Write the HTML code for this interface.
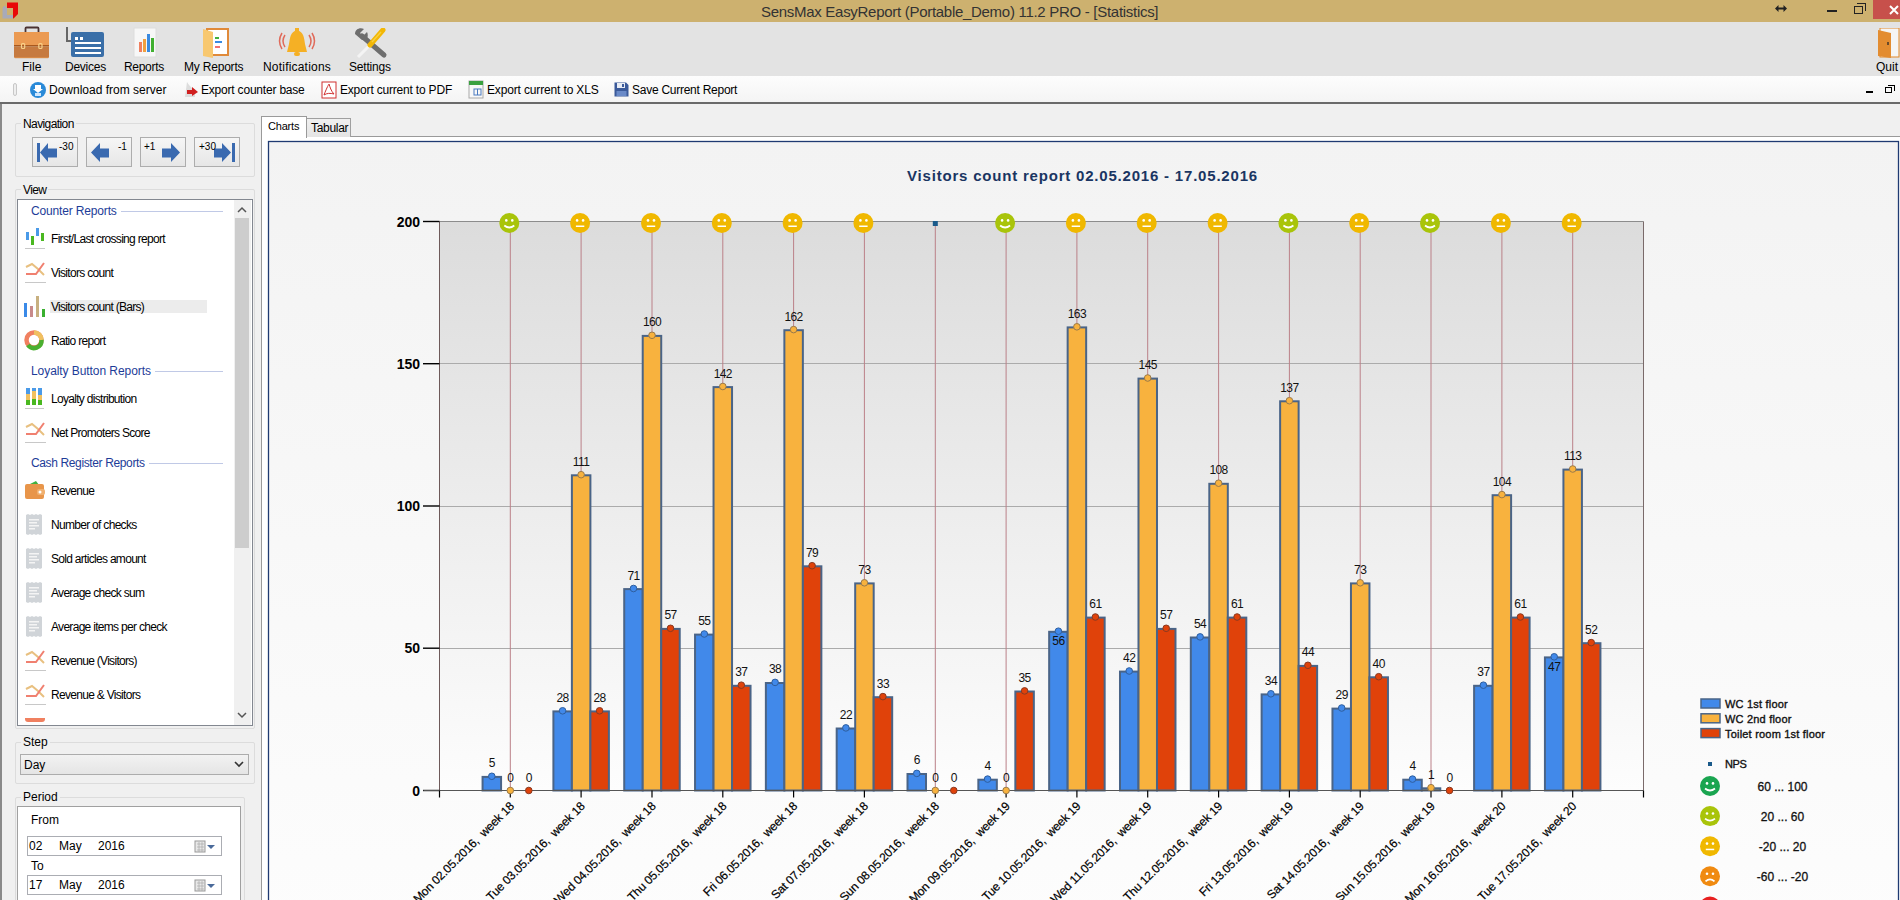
<!DOCTYPE html>
<html><head><meta charset="utf-8"><title>SensMax EasyReport</title>
<style>
*{box-sizing:border-box;margin:0;padding:0}
html,body{width:1900px;height:900px;overflow:hidden;background:#f0f0f0;font-family:"Liberation Sans",sans-serif;font-size:12px;color:#000;position:relative}
.abs{position:absolute}
.t{position:absolute;white-space:pre;line-height:14px}
#titlebar{left:0;top:0;width:1900px;height:22px;background:#cdb16f}
#ribbon{left:0;top:22px;width:1900px;height:54px;background:#e3e3e3}
#tb2{left:0;top:76px;width:1900px;height:26px;background:linear-gradient(#fdfdfd,#f4f4f4)}
#tbline{left:0;top:102px;width:1900px;height:2px;background:#6a6a6a}
.grp{position:absolute;border:1px solid #dcdcdc;border-radius:2px}
.glab{position:absolute;background:#f0f0f0;padding:0 2px;white-space:pre;line-height:14px}
.navbtn{position:absolute;top:137px;width:46px;height:30px;border:1px solid #adadad;background:linear-gradient(#f6f6f6,#e6e6e6)}
.li{position:absolute;left:51px;white-space:pre;line-height:14px;letter-spacing:-0.7px}
.hd{position:absolute;left:31px;color:#1d3c98;white-space:pre;line-height:14px;font-size:12px}
.hdl{position:absolute;height:1px;background:#c0c9e6}
</style></head><body>
<div id="titlebar" class="abs"></div>
<!-- app icon -->
<svg class="abs" style="left:0;top:0" width="22" height="22"><path d="M2.5 8 L4.5 5.5 L7 8 L7 15 L13 15 L13 18.5 L2.5 18.5Z" fill="#a8aab8"/><path d="M7 2.5 L18 2.5 L18 14 L13.5 18.5 L13 18.5 L13 8 L7 8Z" fill="#e80808"/></svg>
<div class="t" style="left:761px;top:3px;font-size:15px;line-height:18px;color:#333;letter-spacing:-0.29px">SensMax EasyReport (Portable_Demo) 11.2 PRO - [Statistics]</div>
<!-- window buttons -->
<svg class="abs" style="left:1775px;top:5px" width="12" height="8"><path d="M0 3.5 L3.5 0 L3.5 2.5 L8.5 2.5 L8.5 0 L12 3.5 L8.5 7 L8.5 4.5 L3.5 4.5 L3.5 7Z" fill="#222"/></svg>
<div class="abs" style="left:1827px;top:10px;width:10px;height:2px;background:#222"></div>
<div class="abs" style="left:1854px;top:6px;width:9px;height:8px;border:1.5px solid #222"></div>
<div class="abs" style="left:1857px;top:3px;width:9px;height:8px;border-top:1.5px solid #222;border-right:1.5px solid #222"></div>
<div class="abs" style="left:1873px;top:0;width:27px;height:19px;background:#c7504b"></div>
<svg class="abs" style="left:1889px;top:5px" width="11" height="10"><path d="M1 1 L9 9 M9 1 L1 9" stroke="#fff" stroke-width="2"/></svg>

<div id="ribbon" class="abs"></div>
<!-- ribbon icons -->
<svg class="abs" style="left:13px;top:26px" width="38" height="33"><path d="M12.5 6 V2.5 Q12.5 1.5 13.5 1.5 H24.5 Q25.5 1.5 25.5 2.5 V6" stroke="#4a3232" stroke-width="1.8" fill="none"/><rect x="1" y="6" width="35" height="13.5" fill="#eb9a52"/><rect x="1" y="19" width="35" height="1.6" fill="#a8581e"/><rect x="1" y="20.6" width="35" height="11" fill="#c67a40"/><rect x="1.8" y="31" width="33.4" height="1.2" fill="#d88a48"/><rect x="8.5" y="17.5" width="3.2" height="5" rx="1" fill="none" stroke="#f8d28a" stroke-width="1.2"/><rect x="25.8" y="17.5" width="3.2" height="5" rx="1" fill="none" stroke="#f8d28a" stroke-width="1.2"/></svg>
<svg class="abs" style="left:66px;top:27px" width="42" height="32"><rect x="0" y="0" width="2" height="15" fill="#666"/><rect x="0" y="13" width="6" height="2" fill="#666"/><rect x="5" y="5" width="33" height="25" rx="2" fill="#3a6fa8"/><rect x="9" y="10" width="3" height="3" fill="#fff"/><rect x="14" y="10" width="3" height="3" fill="#fff"/><rect x="9" y="15" width="26" height="2" fill="#fff"/><rect x="9" y="20" width="26" height="2" fill="#fff"/><rect x="9" y="25" width="26" height="2" fill="#fff"/></svg>
<svg class="abs" style="left:133px;top:27px" width="28" height="32"><rect x="1" y="1" width="22" height="29" fill="#f7f7f7" stroke="#ddd"/><rect x="6" y="15" width="3" height="10" fill="#f08060"/><rect x="10" y="12" width="3" height="13" fill="#f0a040"/><rect x="14" y="7" width="3" height="18" fill="#3a8ae0"/><rect x="18" y="11" width="3" height="14" fill="#40b030"/></svg>
<svg class="abs" style="left:202px;top:28px" width="30" height="32"><rect x="5" y="1" width="21" height="26" fill="#fff" stroke="#e08a3a" stroke-width="2"/><path d="M1 1 L11 4 L11 30 L1 28 Z" fill="#f8c870"/><rect x="13" y="9" width="4" height="2" fill="#40b040"/><rect x="13" y="13" width="7" height="2" fill="#3a8ae0"/><rect x="13" y="18" width="5" height="2" fill="#f07070"/></svg>
<svg class="abs" style="left:277px;top:28px" width="40" height="30"><path d="M20 2 C13 4 13 10 12 16 L10 24 L30 24 L28 16 C27 10 27 4 20 2Z" fill="#f5b025"/><rect x="18" y="0" width="4" height="3" fill="#f5b025"/><rect x="17" y="24" width="6" height="4" rx="2" fill="#f5b025"/><path d="M8 7 Q4 13 8 19" stroke="#e06a5a" stroke-width="1.5" fill="none"/><path d="M5 5 Q0 13 5 21" stroke="#e06a5a" stroke-width="1.5" fill="none"/><path d="M32 7 Q36 13 32 19" stroke="#e06a5a" stroke-width="1.5" fill="none"/><path d="M35 5 Q40 13 35 21" stroke="#e06a5a" stroke-width="1.5" fill="none"/></svg>
<svg class="abs" style="left:354px;top:28px" width="34" height="31"><path d="M15 18 L4 29" stroke="#f4f4f4" stroke-width="3"/><path d="M8 8 L30 27" stroke="#6e6e6e" stroke-width="5" stroke-linecap="round"/><path d="M1 6 C1 1 6 -1 10 1 L6 5 L9 8 L13 4 C15 8 13 13 8 12 Z" fill="#6e6e6e"/><path d="M29 2 L16 17" stroke="#f2b705" stroke-width="5" stroke-linecap="round"/><path d="M27 4 L18 14" stroke="#f8d040" stroke-width="1.5"/></svg>
<svg class="abs" style="left:1877px;top:28px" width="23" height="32"><rect x="3" y="0" width="19" height="29" fill="#f5f5f5" stroke="#e0882a"/><path d="M1 2 L14 5 L14 30 L1 28 Z" fill="#e38c30"/><rect x="10" y="14" width="2" height="3" fill="#6a4a2a"/></svg>
<div class="t" style="left:22px;top:60px">File</div>
<div class="t" style="left:65px;top:60px;letter-spacing:-0.25px">Devices</div>
<div class="t" style="left:124px;top:60px;letter-spacing:-0.3px">Reports</div>
<div class="t" style="left:184px;top:60px;letter-spacing:-0.2px">My Reports</div>
<div class="t" style="left:263px;top:60px;letter-spacing:0.2px">Notifications</div>
<div class="t" style="left:349px;top:60px;letter-spacing:-0.2px">Settings</div>
<div class="t" style="left:1876px;top:60px">Quit</div>

<div id="tb2" class="abs"></div>
<div class="abs" style="left:13px;top:83px;width:4px;height:13px;border:1px solid #c8c8c8;border-radius:2px;background:#eee"></div>
<svg class="abs" style="left:29px;top:81px" width="18" height="18"><circle cx="9" cy="9" r="8" fill="#2a8ad8"/><path d="M6 4 L12 4 L12 8 L14 8 L9 12 L4 8 L6 8Z" fill="#fff"/><rect x="6" y="12" width="6" height="3" fill="#d0e8ff"/></svg>
<svg class="abs" style="left:183px;top:81px" width="16" height="18"><path d="M4 1 L6 4 L12 10 L12 16 L2 16 Z" fill="#ddd"/><path d="M4 9 L9 9 L9 6 L15 11 L9 15 L9 13 L4 13Z" fill="#d02020"/></svg>
<svg class="abs" style="left:321px;top:81px" width="16" height="18"><rect x="1" y="1" width="14" height="16" fill="#fff" stroke="#d03030"/><path d="M3 14 C6 6 8 3 8 3 C9 6 10 10 13 13 C9 12 6 12 3 14Z" stroke="#d03030" fill="none"/></svg>
<svg class="abs" style="left:468px;top:80px" width="16" height="19"><rect x="1" y="1" width="14" height="17" fill="#f8f8f8" stroke="#aaa"/><rect x="1" y="1" width="14" height="4" fill="#3aa040"/><rect x="6" y="9" width="7" height="6" fill="none" stroke="#4a7ac0"/><line x1="9.5" y1="9" x2="9.5" y2="15" stroke="#4a7ac0"/></svg>
<svg class="abs" style="left:614px;top:82px" width="15" height="15"><path d="M0.5 0.5 H12 L14.5 3 V14.5 H0.5Z" fill="#3b5a9a"/><rect x="3" y="1" width="8" height="5" fill="#e8ecf4"/><rect x="8" y="2" width="2" height="3" fill="#3b5a9a"/><rect x="2.5" y="9" width="10" height="5" fill="#6a8ac8"/></svg>
<div class="t" style="left:49px;top:83px">Download from server</div>
<div class="t" style="left:201px;top:83px;letter-spacing:-0.2px">Export counter base</div>
<div class="t" style="left:340px;top:83px;letter-spacing:-0.19px">Export current to PDF</div>
<div class="t" style="left:487px;top:83px;letter-spacing:-0.15px">Export current to XLS</div>
<div class="t" style="left:632px;top:83px;letter-spacing:-0.26px">Save Current Report</div>
<div class="abs" style="left:1866px;top:91px;width:7px;height:2px;background:#000"></div>
<div class="abs" style="left:1885px;top:87px;width:7px;height:6px;border:1.5px solid #000"></div>
<div class="abs" style="left:1888px;top:85px;width:7px;height:6px;border-top:1.5px solid #000;border-right:1.5px solid #000"></div>
<div id="tbline" class="abs"></div>

<!-- left outer panel -->
<div class="abs" style="left:0;top:104px;width:2px;height:796px;background:#8a8a8a"></div>

<!-- navigation group -->
<div class="grp" style="left:15px;top:123px;width:240px;height:54px"></div>
<div class="glab" style="left:21px;top:117px;letter-spacing:-0.6px">Navigation</div>
<div class="navbtn" style="left:32px"></div>
<div class="navbtn" style="left:86px"></div>
<div class="navbtn" style="left:140px"></div>
<div class="navbtn" style="left:194px"></div>
<svg class="abs" style="left:0px;top:137px" width="270" height="30">
 <rect x="37" y="6" width="3" height="19" fill="#3a6ab0"/><path d="M40 15.5 L48 6 L48 11.5 L57 11.5 L57 20.5 L48 20.5 L48 25Z" fill="#3a6ab0"/>
 <path d="M91 15.5 L100 6 L100 11.5 L109 11.5 L109 20.5 L100 20.5 L100 25Z" fill="#3a6ab0"/>
 <path d="M180 15.5 L171 6 L171 11.5 L162 11.5 L162 20.5 L171 20.5 L171 25Z" fill="#3a6ab0"/>
 <rect x="232" y="6" width="3" height="19" fill="#3a6ab0"/><path d="M231 15.5 L222 6 L222 11.5 L214 11.5 L214 20.5 L222 20.5 L222 25Z" fill="#3a6ab0"/>
</svg>
<div class="t" style="left:59px;top:141px;font-size:10px;line-height:11px">-30</div>
<div class="t" style="left:118px;top:141px;font-size:10px;line-height:11px">-1</div>
<div class="t" style="left:144px;top:141px;font-size:10px;line-height:11px">+1</div>
<div class="t" style="left:199px;top:141px;font-size:10px;line-height:11px">+30</div>

<!-- view group -->
<div class="grp" style="left:15px;top:189px;width:240px;height:540px"></div>
<div class="glab" style="left:21px;top:183px;letter-spacing:-0.6px">View</div>
<div class="abs" style="left:17px;top:199px;width:236px;height:527px;background:#fff;border:1px solid #828790"></div>
<div class="abs" style="left:234px;top:200px;width:17px;height:525px;background:#f0f0f0"></div>
<div class="abs" style="left:235px;top:218px;width:14px;height:330px;background:#cdcdcd"></div>
<svg class="abs" style="left:235px;top:204px" width="14" height="12"><path d="M3 8 L7 4 L11 8" stroke="#555" stroke-width="1.5" fill="none"/></svg>
<svg class="abs" style="left:235px;top:709px" width="14" height="12"><path d="M3 4 L7 8 L11 4" stroke="#555" stroke-width="1.5" fill="none"/></svg>
<div class="abs" style="left:50px;top:300px;width:157px;height:13px;background:#ececec"></div>
<div class="hd" style="top:204px;letter-spacing:-0.16px">Counter Reports</div>
<div class="hdl" style="top:210.5px;left:121px;width:102px"></div>
<svg class="abs" style="left:24px;top:225px" width="24" height="26"><rect x="2" y="7" width="3" height="8" fill="#4a9ae8"/><rect x="7" y="11" width="3" height="9" fill="#4ab820"/><rect x="12" y="3" width="3" height="8" fill="#4a9ae8"/><rect x="17" y="8" width="3" height="8" fill="#4ab820"/><rect x="1" y="23" width="20" height="1" fill="#c8c8c8"/></svg>
<div class="li" style="top:232px">First/Last crossing report</div>
<svg class="abs" style="left:24px;top:259px" width="24" height="26"><path d="M2 8 L8 5 L14 10 L20 16" stroke="#e8c080" stroke-width="2" fill="none"/><path d="M2 15 L12 15 L20 4" stroke="#f08070" stroke-width="2" fill="none"/><rect x="1" y="23" width="21" height="1" fill="#c8c8c8"/></svg>
<div class="li" style="top:266px">Visitors count</div>
<svg class="abs" style="left:24px;top:293px" width="24" height="26"><rect x="0" y="10" width="3" height="14" fill="#3a8ae8"/><rect x="6" y="13" width="3" height="11" fill="#c88a8a"/><rect x="12" y="3" width="3" height="21" fill="#c8b080"/><rect x="18" y="16" width="3" height="8" fill="#3ab030"/></svg>
<div class="li" style="top:300px">Visitors count (Bars)</div>
<svg class="abs" style="left:24px;top:329px" width="24" height="24"><circle cx="10" cy="11" r="7.5" fill="none" stroke="#f08060" stroke-width="4.5"/><path d="M10 3.5 A7.5 7.5 0 0 1 17.5 11" fill="none" stroke="#f0c060" stroke-width="4.5"/><path d="M17.5 11 A7.5 7.5 0 0 1 4 16" fill="none" stroke="#4ab030" stroke-width="4.5"/></svg>
<div class="li" style="top:334px">Ratio report</div>
<div class="hd" style="top:364px;letter-spacing:-0.07px">Loyalty Button Reports</div>
<div class="hdl" style="top:370.5px;left:155px;width:68px"></div>
<svg class="abs" style="left:24px;top:385px" width="24" height="26"><rect x="2" y="3" width="4" height="6" fill="#4a9ae8"/><rect x="2" y="9" width="4" height="6" fill="#f0c060"/><rect x="2" y="15" width="4" height="5" fill="#4ab820"/><rect x="8" y="3" width="4" height="3" fill="#4a9ae8"/><rect x="8" y="6" width="4" height="8" fill="#f0c060"/><rect x="8" y="14" width="4" height="6" fill="#4ab820"/><rect x="14" y="3" width="4" height="7" fill="#4a9ae8"/><rect x="14" y="10" width="4" height="5" fill="#f0c060"/><rect x="14" y="15" width="4" height="5" fill="#4ab820"/><rect x="1" y="23" width="19" height="1" fill="#c8c8c8"/></svg>
<div class="li" style="top:392px">Loyalty distribution</div>
<svg class="abs" style="left:24px;top:419px" width="24" height="26"><path d="M2 8 L8 5 L14 10 L20 16" stroke="#e8c080" stroke-width="2" fill="none"/><path d="M2 15 L12 15 L20 4" stroke="#f08070" stroke-width="2" fill="none"/><rect x="1" y="23" width="21" height="1" fill="#c8c8c8"/></svg>
<div class="li" style="top:426px">Net Promoters Score</div>
<div class="hd" style="top:456px;letter-spacing:-0.37px">Cash Register Reports</div>
<div class="hdl" style="top:462.5px;left:149px;width:74px"></div>
<svg class="abs" style="left:24px;top:479px" width="24" height="24"><path d="M6 5 L12 2 L15 6Z" fill="#40b040"/><rect x="1" y="5" width="19" height="15" rx="2" fill="#e8954a"/><rect x="13" y="10" width="8" height="6" rx="2" fill="#f0b070"/><circle cx="16" cy="13" r="1.5" fill="#fff"/></svg>
<div class="li" style="top:484px">Revenue</div>
<svg class="abs" style="left:24px;top:513px" width="24" height="24"><path d="M2 2 L4 1 L6 2 L8 1 L10 2 L12 1 L14 2 L16 1 L18 2 L18 21 L16 22 L14 21 L12 22 L10 21 L8 22 L6 21 L4 22 L2 21Z" fill="#d0d4d8"/><rect x="5" y="6" width="10" height="1.5" fill="#f4f4f4"/><rect x="5" y="9" width="8" height="1.5" fill="#f4f4f4"/><rect x="5" y="12" width="10" height="1.5" fill="#f4f4f4"/><rect x="5" y="15" width="6" height="1.5" fill="#f4f4f4"/></svg>
<div class="li" style="top:518px">Number of checks</div>
<svg class="abs" style="left:24px;top:547px" width="24" height="24"><path d="M2 2 L4 1 L6 2 L8 1 L10 2 L12 1 L14 2 L16 1 L18 2 L18 21 L16 22 L14 21 L12 22 L10 21 L8 22 L6 21 L4 22 L2 21Z" fill="#d0d4d8"/><rect x="5" y="6" width="10" height="1.5" fill="#f4f4f4"/><rect x="5" y="9" width="8" height="1.5" fill="#f4f4f4"/><rect x="5" y="12" width="10" height="1.5" fill="#f4f4f4"/><rect x="5" y="15" width="6" height="1.5" fill="#f4f4f4"/></svg>
<div class="li" style="top:552px">Sold articles amount</div>
<svg class="abs" style="left:24px;top:581px" width="24" height="24"><path d="M2 2 L4 1 L6 2 L8 1 L10 2 L12 1 L14 2 L16 1 L18 2 L18 21 L16 22 L14 21 L12 22 L10 21 L8 22 L6 21 L4 22 L2 21Z" fill="#d0d4d8"/><rect x="5" y="6" width="10" height="1.5" fill="#f4f4f4"/><rect x="5" y="9" width="8" height="1.5" fill="#f4f4f4"/><rect x="5" y="12" width="10" height="1.5" fill="#f4f4f4"/><rect x="5" y="15" width="6" height="1.5" fill="#f4f4f4"/></svg>
<div class="li" style="top:586px">Average check sum</div>
<svg class="abs" style="left:24px;top:615px" width="24" height="24"><path d="M2 2 L4 1 L6 2 L8 1 L10 2 L12 1 L14 2 L16 1 L18 2 L18 21 L16 22 L14 21 L12 22 L10 21 L8 22 L6 21 L4 22 L2 21Z" fill="#d0d4d8"/><rect x="5" y="6" width="10" height="1.5" fill="#f4f4f4"/><rect x="5" y="9" width="8" height="1.5" fill="#f4f4f4"/><rect x="5" y="12" width="10" height="1.5" fill="#f4f4f4"/><rect x="5" y="15" width="6" height="1.5" fill="#f4f4f4"/></svg>
<div class="li" style="top:620px">Average items per check</div>
<svg class="abs" style="left:24px;top:647px" width="24" height="26"><path d="M2 8 L8 5 L14 10 L20 16" stroke="#e8c080" stroke-width="2" fill="none"/><path d="M2 15 L12 15 L20 4" stroke="#f08070" stroke-width="2" fill="none"/><rect x="1" y="23" width="21" height="1" fill="#c8c8c8"/></svg>
<div class="li" style="top:654px">Revenue (Visitors)</div>
<svg class="abs" style="left:24px;top:681px" width="24" height="26"><path d="M2 8 L8 5 L14 10 L20 16" stroke="#e8c080" stroke-width="2" fill="none"/><path d="M2 15 L12 15 L20 4" stroke="#f08070" stroke-width="2" fill="none"/><rect x="1" y="23" width="21" height="1" fill="#c8c8c8"/></svg>
<div class="li" style="top:688px">Revenue &amp; Visitors</div>
<div class="abs" style="left:25px;top:718px;width:20px;height:4px;background:#f08060;border-radius:0 0 3px 3px"></div>

<!-- step group -->
<div class="grp" style="left:15px;top:742px;width:240px;height:42px"></div>
<div class="glab" style="left:21px;top:735px">Step</div>
<div class="abs" style="left:20px;top:754px;width:229px;height:21px;border:1px solid #acacac;background:linear-gradient(#f2f2f2,#e5e5e5)"></div>
<div class="t" style="left:24px;top:758px">Day</div>
<svg class="abs" style="left:232px;top:758px" width="14" height="12"><path d="M3 4 L7 8 L11 4" stroke="#333" stroke-width="1.6" fill="none"/></svg>

<!-- period group -->
<div class="grp" style="left:15px;top:797px;width:230px;height:120px"></div>
<div class="glab" style="left:21px;top:790px">Period</div>
<div class="abs" style="left:17px;top:806px;width:224px;height:100px;background:#fff;border:1px solid #a0a0a0"></div>
<div class="t" style="left:31px;top:813px">From</div>
<div class="abs" style="left:27px;top:836px;width:195px;height:20px;background:#fff;border:1px solid #abadb3"></div>
<div class="t" style="left:29px;top:839px">02</div><div class="t" style="left:59px;top:839px">May</div><div class="t" style="left:98px;top:839px">2016</div>
<div class="t" style="left:31px;top:859px">To</div>
<div class="abs" style="left:27px;top:875px;width:195px;height:20px;background:#fff;border:1px solid #abadb3"></div>
<div class="t" style="left:29px;top:878px">17</div><div class="t" style="left:59px;top:878px">May</div><div class="t" style="left:98px;top:878px">2016</div>
<svg class="abs" style="left:194px;top:838px" width="24" height="16"><rect x="1" y="3" width="10" height="11" fill="#e8e8e8" stroke="#999"/><path d="M3 6 H10 M3 9 H10 M3 12 H10 M5 4 V14 M8 4 V14" stroke="#aaa" stroke-width="0.7"/><path d="M13 7 L21 7 L17 11Z" fill="#4a6a9a"/></svg>
<svg class="abs" style="left:194px;top:877px" width="24" height="16"><rect x="1" y="3" width="10" height="11" fill="#e8e8e8" stroke="#999"/><path d="M3 6 H10 M3 9 H10 M3 12 H10 M5 4 V14 M8 4 V14" stroke="#aaa" stroke-width="0.7"/><path d="M13 7 L21 7 L17 11Z" fill="#4a6a9a"/></svg>

<!-- tabs -->
<div class="abs" style="left:261px;top:136px;width:1639px;height:764px;background:#fff;border-left:1px solid #9a9a9a;border-top:1px solid #9a9a9a"></div>
<div class="abs" style="left:306px;top:118px;width:45px;height:19px;background:linear-gradient(#f0f0f0,#e4e4e4);border:1px solid #a0a0a0;border-bottom:none"></div>
<div class="abs" style="left:261px;top:116px;width:46px;height:22px;background:#fff;border:1px solid #9a9a9a;border-bottom:none"></div>
<div class="t" style="left:268px;top:119px;font-size:11px;letter-spacing:-0.2px">Charts</div>
<div class="t" style="left:311px;top:121px;font-size:12px;letter-spacing:-0.3px">Tabular</div>

<svg width="1900" height="900" viewBox="0 0 1900 900" style="position:absolute;left:0;top:0">
<defs><linearGradient id="pg" x1="0" y1="0" x2="0" y2="1"><stop offset="0" stop-color="#dcdcdc"/><stop offset="1" stop-color="#fdfdfd"/></linearGradient><linearGradient id="cg" x1="0" y1="0" x2="0" y2="1"><stop offset="0" stop-color="#f3f3f3"/><stop offset="1" stop-color="#fdfdfd"/></linearGradient></defs>
<rect x="268.5" y="141.5" width="1630" height="800" fill="url(#cg)" stroke="#1f3a72" stroke-width="1.3"/>
<text x="1082.5" y="181" text-anchor="middle" font-family="Liberation Sans" font-weight="bold" font-size="15" fill="#1a3562" letter-spacing="0.8">Visitors count report 02.05.2016 - 17.05.2016</text>
<rect x="439.5" y="221.5" width="1204.0" height="569.0" fill="url(#pg)"/>
<line x1="439.5" y1="648.5" x2="1643.5" y2="648.5" stroke="#ababab" stroke-width="1"/>
<line x1="439.5" y1="506.5" x2="1643.5" y2="506.5" stroke="#ababab" stroke-width="1"/>
<line x1="439.5" y1="363.5" x2="1643.5" y2="363.5" stroke="#ababab" stroke-width="1"/>
<line x1="439.5" y1="221.5" x2="1643.5" y2="221.5" stroke="#8c8c8c" stroke-width="1.2"/>
<line x1="439.5" y1="221.5" x2="439.5" y2="790.5" stroke="#6e5a5a" stroke-width="1"/>
<line x1="1643.5" y1="221.5" x2="1643.5" y2="790.5" stroke="#7a6a6a" stroke-width="1"/>
<line x1="423" y1="790.5" x2="439.5" y2="790.5" stroke="#000" stroke-width="1.4"/>
<text x="420" y="795.5" text-anchor="end" font-family="Liberation Sans" font-size="14" font-weight="bold" fill="#000">0</text>
<line x1="423" y1="648.2" x2="439.5" y2="648.2" stroke="#000" stroke-width="1.4"/>
<text x="420" y="653.2" text-anchor="end" font-family="Liberation Sans" font-size="14" font-weight="bold" fill="#000">50</text>
<line x1="423" y1="506.0" x2="439.5" y2="506.0" stroke="#000" stroke-width="1.4"/>
<text x="420" y="511.0" text-anchor="end" font-family="Liberation Sans" font-size="14" font-weight="bold" fill="#000">100</text>
<line x1="423" y1="363.7" x2="439.5" y2="363.7" stroke="#000" stroke-width="1.4"/>
<text x="420" y="368.7" text-anchor="end" font-family="Liberation Sans" font-size="14" font-weight="bold" fill="#000">150</text>
<line x1="423" y1="221.5" x2="439.5" y2="221.5" stroke="#000" stroke-width="1.4"/>
<text x="420" y="226.5" text-anchor="end" font-family="Liberation Sans" font-size="14" font-weight="bold" fill="#000">200</text>
<line x1="510.3" y1="221.5" x2="510.3" y2="790.5" stroke="#bb8088" stroke-width="1"/>
<line x1="581.1" y1="221.5" x2="581.1" y2="790.5" stroke="#bb8088" stroke-width="1"/>
<line x1="652.0" y1="221.5" x2="652.0" y2="790.5" stroke="#bb8088" stroke-width="1"/>
<line x1="722.8" y1="221.5" x2="722.8" y2="790.5" stroke="#bb8088" stroke-width="1"/>
<line x1="793.6" y1="221.5" x2="793.6" y2="790.5" stroke="#bb8088" stroke-width="1"/>
<line x1="864.4" y1="221.5" x2="864.4" y2="790.5" stroke="#bb8088" stroke-width="1"/>
<line x1="935.3" y1="221.5" x2="935.3" y2="790.5" stroke="#bb8088" stroke-width="1"/>
<line x1="1006.1" y1="221.5" x2="1006.1" y2="790.5" stroke="#bb8088" stroke-width="1"/>
<line x1="1076.9" y1="221.5" x2="1076.9" y2="790.5" stroke="#bb8088" stroke-width="1"/>
<line x1="1147.7" y1="221.5" x2="1147.7" y2="790.5" stroke="#bb8088" stroke-width="1"/>
<line x1="1218.6" y1="221.5" x2="1218.6" y2="790.5" stroke="#bb8088" stroke-width="1"/>
<line x1="1289.4" y1="221.5" x2="1289.4" y2="790.5" stroke="#bb8088" stroke-width="1"/>
<line x1="1360.2" y1="221.5" x2="1360.2" y2="790.5" stroke="#bb8088" stroke-width="1"/>
<line x1="1431.0" y1="221.5" x2="1431.0" y2="790.5" stroke="#bb8088" stroke-width="1"/>
<line x1="1501.9" y1="221.5" x2="1501.9" y2="790.5" stroke="#bb8088" stroke-width="1"/>
<line x1="1572.7" y1="221.5" x2="1572.7" y2="790.5" stroke="#bb8088" stroke-width="1"/>
<rect x="482.57" y="776.9" width="18.5" height="13.6" fill="#4189ea" stroke="#4a6487" stroke-width="2"/>
<rect x="553.40" y="711.4" width="18.5" height="79.1" fill="#4189ea" stroke="#4a6487" stroke-width="2"/>
<rect x="571.90" y="475.3" width="18.5" height="315.2" fill="#f8b23e" stroke="#4a6487" stroke-width="2"/>
<rect x="590.40" y="711.4" width="18.5" height="79.1" fill="#e0420a" stroke="#4a6487" stroke-width="2"/>
<rect x="624.22" y="589.1" width="18.5" height="201.4" fill="#4189ea" stroke="#4a6487" stroke-width="2"/>
<rect x="642.72" y="335.9" width="18.5" height="454.6" fill="#f8b23e" stroke="#4a6487" stroke-width="2"/>
<rect x="661.22" y="628.9" width="18.5" height="161.6" fill="#e0420a" stroke="#4a6487" stroke-width="2"/>
<rect x="695.04" y="634.6" width="18.5" height="155.9" fill="#4189ea" stroke="#4a6487" stroke-width="2"/>
<rect x="713.54" y="387.1" width="18.5" height="403.4" fill="#f8b23e" stroke="#4a6487" stroke-width="2"/>
<rect x="732.04" y="685.8" width="18.5" height="104.7" fill="#e0420a" stroke="#4a6487" stroke-width="2"/>
<rect x="765.87" y="683.0" width="18.5" height="107.5" fill="#4189ea" stroke="#4a6487" stroke-width="2"/>
<rect x="784.37" y="330.2" width="18.5" height="460.3" fill="#f8b23e" stroke="#4a6487" stroke-width="2"/>
<rect x="802.87" y="566.3" width="18.5" height="224.2" fill="#e0420a" stroke="#4a6487" stroke-width="2"/>
<rect x="836.69" y="728.5" width="18.5" height="62.0" fill="#4189ea" stroke="#4a6487" stroke-width="2"/>
<rect x="855.19" y="583.4" width="18.5" height="207.1" fill="#f8b23e" stroke="#4a6487" stroke-width="2"/>
<rect x="873.69" y="697.2" width="18.5" height="93.3" fill="#e0420a" stroke="#4a6487" stroke-width="2"/>
<rect x="907.51" y="774.0" width="18.5" height="16.5" fill="#4189ea" stroke="#4a6487" stroke-width="2"/>
<rect x="978.34" y="779.7" width="18.5" height="10.8" fill="#4189ea" stroke="#4a6487" stroke-width="2"/>
<rect x="1015.34" y="691.5" width="18.5" height="99.0" fill="#e0420a" stroke="#4a6487" stroke-width="2"/>
<rect x="1049.16" y="631.8" width="18.5" height="158.7" fill="#4189ea" stroke="#4a6487" stroke-width="2"/>
<rect x="1067.66" y="327.4" width="18.5" height="463.1" fill="#f8b23e" stroke="#4a6487" stroke-width="2"/>
<rect x="1086.16" y="617.6" width="18.5" height="172.9" fill="#e0420a" stroke="#4a6487" stroke-width="2"/>
<rect x="1119.99" y="671.6" width="18.5" height="118.9" fill="#4189ea" stroke="#4a6487" stroke-width="2"/>
<rect x="1138.49" y="378.6" width="18.5" height="411.9" fill="#f8b23e" stroke="#4a6487" stroke-width="2"/>
<rect x="1156.99" y="628.9" width="18.5" height="161.6" fill="#e0420a" stroke="#4a6487" stroke-width="2"/>
<rect x="1190.81" y="637.5" width="18.5" height="153.0" fill="#4189ea" stroke="#4a6487" stroke-width="2"/>
<rect x="1209.31" y="483.8" width="18.5" height="306.7" fill="#f8b23e" stroke="#4a6487" stroke-width="2"/>
<rect x="1227.81" y="617.6" width="18.5" height="172.9" fill="#e0420a" stroke="#4a6487" stroke-width="2"/>
<rect x="1261.63" y="694.4" width="18.5" height="96.1" fill="#4189ea" stroke="#4a6487" stroke-width="2"/>
<rect x="1280.13" y="401.3" width="18.5" height="389.2" fill="#f8b23e" stroke="#4a6487" stroke-width="2"/>
<rect x="1298.63" y="665.9" width="18.5" height="124.6" fill="#e0420a" stroke="#4a6487" stroke-width="2"/>
<rect x="1332.46" y="708.6" width="18.5" height="81.9" fill="#4189ea" stroke="#4a6487" stroke-width="2"/>
<rect x="1350.96" y="583.4" width="18.5" height="207.1" fill="#f8b23e" stroke="#4a6487" stroke-width="2"/>
<rect x="1369.46" y="677.3" width="18.5" height="113.2" fill="#e0420a" stroke="#4a6487" stroke-width="2"/>
<rect x="1403.28" y="779.7" width="18.5" height="10.8" fill="#4189ea" stroke="#4a6487" stroke-width="2"/>
<rect x="1421.78" y="788.3" width="18.5" height="2.2" fill="#f8b23e" stroke="#4a6487" stroke-width="2"/>
<rect x="1474.10" y="685.8" width="18.5" height="104.7" fill="#4189ea" stroke="#4a6487" stroke-width="2"/>
<rect x="1492.60" y="495.2" width="18.5" height="295.3" fill="#f8b23e" stroke="#4a6487" stroke-width="2"/>
<rect x="1511.10" y="617.6" width="18.5" height="172.9" fill="#e0420a" stroke="#4a6487" stroke-width="2"/>
<rect x="1544.93" y="657.4" width="18.5" height="133.1" fill="#4189ea" stroke="#4a6487" stroke-width="2"/>
<rect x="1563.43" y="469.6" width="18.5" height="320.9" fill="#f8b23e" stroke="#4a6487" stroke-width="2"/>
<rect x="1581.93" y="643.2" width="18.5" height="147.3" fill="#e0420a" stroke="#4a6487" stroke-width="2"/>
<line x1="423.5" y1="790.5" x2="1643.5" y2="790.5" stroke="#555" stroke-width="1.2"/>
<line x1="439.5" y1="790.5" x2="439.5" y2="797.5" stroke="#000" stroke-width="1.2"/>
<line x1="510.3" y1="790.5" x2="510.3" y2="797.5" stroke="#000" stroke-width="1.2"/>
<line x1="581.1" y1="790.5" x2="581.1" y2="797.5" stroke="#000" stroke-width="1.2"/>
<line x1="652.0" y1="790.5" x2="652.0" y2="797.5" stroke="#000" stroke-width="1.2"/>
<line x1="722.8" y1="790.5" x2="722.8" y2="797.5" stroke="#000" stroke-width="1.2"/>
<line x1="793.6" y1="790.5" x2="793.6" y2="797.5" stroke="#000" stroke-width="1.2"/>
<line x1="864.4" y1="790.5" x2="864.4" y2="797.5" stroke="#000" stroke-width="1.2"/>
<line x1="935.3" y1="790.5" x2="935.3" y2="797.5" stroke="#000" stroke-width="1.2"/>
<line x1="1006.1" y1="790.5" x2="1006.1" y2="797.5" stroke="#000" stroke-width="1.2"/>
<line x1="1076.9" y1="790.5" x2="1076.9" y2="797.5" stroke="#000" stroke-width="1.2"/>
<line x1="1147.7" y1="790.5" x2="1147.7" y2="797.5" stroke="#000" stroke-width="1.2"/>
<line x1="1218.6" y1="790.5" x2="1218.6" y2="797.5" stroke="#000" stroke-width="1.2"/>
<line x1="1289.4" y1="790.5" x2="1289.4" y2="797.5" stroke="#000" stroke-width="1.2"/>
<line x1="1360.2" y1="790.5" x2="1360.2" y2="797.5" stroke="#000" stroke-width="1.2"/>
<line x1="1431.0" y1="790.5" x2="1431.0" y2="797.5" stroke="#000" stroke-width="1.2"/>
<line x1="1501.9" y1="790.5" x2="1501.9" y2="797.5" stroke="#000" stroke-width="1.2"/>
<line x1="1572.7" y1="790.5" x2="1572.7" y2="797.5" stroke="#000" stroke-width="1.2"/>
<line x1="1643.5" y1="790.5" x2="1643.5" y2="797.5" stroke="#000" stroke-width="1.2"/>
<circle cx="491.8" cy="776.3" r="3.3" fill="#4189ea" stroke="#2f5f9f" stroke-width="1"/>
<circle cx="510.3" cy="790.5" r="3.3" fill="#f8b23e" stroke="#9a7a4a" stroke-width="1"/>
<circle cx="528.8" cy="790.5" r="3.3" fill="#e0420a" stroke="#8a3a22" stroke-width="1"/>
<text x="491.8" y="767.3" text-anchor="middle" font-family="Liberation Sans" font-size="12" fill="#111" letter-spacing="-0.6">5</text>
<text x="510.3" y="781.5" text-anchor="middle" font-family="Liberation Sans" font-size="12" fill="#111" letter-spacing="-0.6">0</text>
<text x="528.8" y="781.5" text-anchor="middle" font-family="Liberation Sans" font-size="12" fill="#111" letter-spacing="-0.6">0</text>
<circle cx="562.6" cy="710.8" r="3.3" fill="#4189ea" stroke="#2f5f9f" stroke-width="1"/>
<circle cx="581.1" cy="474.7" r="3.3" fill="#f8b23e" stroke="#9a7a4a" stroke-width="1"/>
<circle cx="599.6" cy="710.8" r="3.3" fill="#e0420a" stroke="#8a3a22" stroke-width="1"/>
<text x="562.6" y="701.8" text-anchor="middle" font-family="Liberation Sans" font-size="12" fill="#111" letter-spacing="-0.6">28</text>
<text x="581.1" y="465.7" text-anchor="middle" font-family="Liberation Sans" font-size="12" fill="#111" letter-spacing="-0.6">111</text>
<text x="599.6" y="701.8" text-anchor="middle" font-family="Liberation Sans" font-size="12" fill="#111" letter-spacing="-0.6">28</text>
<circle cx="633.5" cy="588.5" r="3.3" fill="#4189ea" stroke="#2f5f9f" stroke-width="1"/>
<circle cx="652.0" cy="335.3" r="3.3" fill="#f8b23e" stroke="#9a7a4a" stroke-width="1"/>
<circle cx="670.5" cy="628.3" r="3.3" fill="#e0420a" stroke="#8a3a22" stroke-width="1"/>
<text x="633.5" y="579.5" text-anchor="middle" font-family="Liberation Sans" font-size="12" fill="#111" letter-spacing="-0.6">71</text>
<text x="652.0" y="326.3" text-anchor="middle" font-family="Liberation Sans" font-size="12" fill="#111" letter-spacing="-0.6">160</text>
<text x="670.5" y="619.3" text-anchor="middle" font-family="Liberation Sans" font-size="12" fill="#111" letter-spacing="-0.6">57</text>
<circle cx="704.3" cy="634.0" r="3.3" fill="#4189ea" stroke="#2f5f9f" stroke-width="1"/>
<circle cx="722.8" cy="386.5" r="3.3" fill="#f8b23e" stroke="#9a7a4a" stroke-width="1"/>
<circle cx="741.3" cy="685.2" r="3.3" fill="#e0420a" stroke="#8a3a22" stroke-width="1"/>
<text x="704.3" y="625.0" text-anchor="middle" font-family="Liberation Sans" font-size="12" fill="#111" letter-spacing="-0.6">55</text>
<text x="722.8" y="377.5" text-anchor="middle" font-family="Liberation Sans" font-size="12" fill="#111" letter-spacing="-0.6">142</text>
<text x="741.3" y="676.2" text-anchor="middle" font-family="Liberation Sans" font-size="12" fill="#111" letter-spacing="-0.6">37</text>
<circle cx="775.1" cy="682.4" r="3.3" fill="#4189ea" stroke="#2f5f9f" stroke-width="1"/>
<circle cx="793.6" cy="329.6" r="3.3" fill="#f8b23e" stroke="#9a7a4a" stroke-width="1"/>
<circle cx="812.1" cy="565.7" r="3.3" fill="#e0420a" stroke="#8a3a22" stroke-width="1"/>
<text x="775.1" y="673.4" text-anchor="middle" font-family="Liberation Sans" font-size="12" fill="#111" letter-spacing="-0.6">38</text>
<text x="793.6" y="320.6" text-anchor="middle" font-family="Liberation Sans" font-size="12" fill="#111" letter-spacing="-0.6">162</text>
<text x="812.1" y="556.7" text-anchor="middle" font-family="Liberation Sans" font-size="12" fill="#111" letter-spacing="-0.6">79</text>
<circle cx="845.9" cy="727.9" r="3.3" fill="#4189ea" stroke="#2f5f9f" stroke-width="1"/>
<circle cx="864.4" cy="582.8" r="3.3" fill="#f8b23e" stroke="#9a7a4a" stroke-width="1"/>
<circle cx="882.9" cy="696.6" r="3.3" fill="#e0420a" stroke="#8a3a22" stroke-width="1"/>
<text x="845.9" y="718.9" text-anchor="middle" font-family="Liberation Sans" font-size="12" fill="#111" letter-spacing="-0.6">22</text>
<text x="864.4" y="573.8" text-anchor="middle" font-family="Liberation Sans" font-size="12" fill="#111" letter-spacing="-0.6">73</text>
<text x="882.9" y="687.6" text-anchor="middle" font-family="Liberation Sans" font-size="12" fill="#111" letter-spacing="-0.6">33</text>
<circle cx="916.8" cy="773.4" r="3.3" fill="#4189ea" stroke="#2f5f9f" stroke-width="1"/>
<circle cx="935.3" cy="790.5" r="3.3" fill="#f8b23e" stroke="#9a7a4a" stroke-width="1"/>
<circle cx="953.8" cy="790.5" r="3.3" fill="#e0420a" stroke="#8a3a22" stroke-width="1"/>
<text x="916.8" y="764.4" text-anchor="middle" font-family="Liberation Sans" font-size="12" fill="#111" letter-spacing="-0.6">6</text>
<text x="935.3" y="781.5" text-anchor="middle" font-family="Liberation Sans" font-size="12" fill="#111" letter-spacing="-0.6">0</text>
<text x="953.8" y="781.5" text-anchor="middle" font-family="Liberation Sans" font-size="12" fill="#111" letter-spacing="-0.6">0</text>
<circle cx="987.6" cy="779.1" r="3.3" fill="#4189ea" stroke="#2f5f9f" stroke-width="1"/>
<circle cx="1006.1" cy="790.5" r="3.3" fill="#f8b23e" stroke="#9a7a4a" stroke-width="1"/>
<circle cx="1024.6" cy="690.9" r="3.3" fill="#e0420a" stroke="#8a3a22" stroke-width="1"/>
<text x="987.6" y="770.1" text-anchor="middle" font-family="Liberation Sans" font-size="12" fill="#111" letter-spacing="-0.6">4</text>
<text x="1006.1" y="781.5" text-anchor="middle" font-family="Liberation Sans" font-size="12" fill="#111" letter-spacing="-0.6">0</text>
<text x="1024.6" y="681.9" text-anchor="middle" font-family="Liberation Sans" font-size="12" fill="#111" letter-spacing="-0.6">35</text>
<circle cx="1058.4" cy="631.2" r="3.3" fill="#4189ea" stroke="#2f5f9f" stroke-width="1"/>
<circle cx="1076.9" cy="326.8" r="3.3" fill="#f8b23e" stroke="#9a7a4a" stroke-width="1"/>
<circle cx="1095.4" cy="617.0" r="3.3" fill="#e0420a" stroke="#8a3a22" stroke-width="1"/>
<text x="1058.4" y="645.2" text-anchor="middle" font-family="Liberation Sans" font-size="12" fill="#111" letter-spacing="-0.6">56</text>
<text x="1076.9" y="317.8" text-anchor="middle" font-family="Liberation Sans" font-size="12" fill="#111" letter-spacing="-0.6">163</text>
<text x="1095.4" y="608.0" text-anchor="middle" font-family="Liberation Sans" font-size="12" fill="#111" letter-spacing="-0.6">61</text>
<circle cx="1129.2" cy="671.0" r="3.3" fill="#4189ea" stroke="#2f5f9f" stroke-width="1"/>
<circle cx="1147.7" cy="378.0" r="3.3" fill="#f8b23e" stroke="#9a7a4a" stroke-width="1"/>
<circle cx="1166.2" cy="628.3" r="3.3" fill="#e0420a" stroke="#8a3a22" stroke-width="1"/>
<text x="1129.2" y="662.0" text-anchor="middle" font-family="Liberation Sans" font-size="12" fill="#111" letter-spacing="-0.6">42</text>
<text x="1147.7" y="369.0" text-anchor="middle" font-family="Liberation Sans" font-size="12" fill="#111" letter-spacing="-0.6">145</text>
<text x="1166.2" y="619.3" text-anchor="middle" font-family="Liberation Sans" font-size="12" fill="#111" letter-spacing="-0.6">57</text>
<circle cx="1200.1" cy="636.9" r="3.3" fill="#4189ea" stroke="#2f5f9f" stroke-width="1"/>
<circle cx="1218.6" cy="483.2" r="3.3" fill="#f8b23e" stroke="#9a7a4a" stroke-width="1"/>
<circle cx="1237.1" cy="617.0" r="3.3" fill="#e0420a" stroke="#8a3a22" stroke-width="1"/>
<text x="1200.1" y="627.9" text-anchor="middle" font-family="Liberation Sans" font-size="12" fill="#111" letter-spacing="-0.6">54</text>
<text x="1218.6" y="474.2" text-anchor="middle" font-family="Liberation Sans" font-size="12" fill="#111" letter-spacing="-0.6">108</text>
<text x="1237.1" y="608.0" text-anchor="middle" font-family="Liberation Sans" font-size="12" fill="#111" letter-spacing="-0.6">61</text>
<circle cx="1270.9" cy="693.8" r="3.3" fill="#4189ea" stroke="#2f5f9f" stroke-width="1"/>
<circle cx="1289.4" cy="400.7" r="3.3" fill="#f8b23e" stroke="#9a7a4a" stroke-width="1"/>
<circle cx="1307.9" cy="665.3" r="3.3" fill="#e0420a" stroke="#8a3a22" stroke-width="1"/>
<text x="1270.9" y="684.8" text-anchor="middle" font-family="Liberation Sans" font-size="12" fill="#111" letter-spacing="-0.6">34</text>
<text x="1289.4" y="391.7" text-anchor="middle" font-family="Liberation Sans" font-size="12" fill="#111" letter-spacing="-0.6">137</text>
<text x="1307.9" y="656.3" text-anchor="middle" font-family="Liberation Sans" font-size="12" fill="#111" letter-spacing="-0.6">44</text>
<circle cx="1341.7" cy="708.0" r="3.3" fill="#4189ea" stroke="#2f5f9f" stroke-width="1"/>
<circle cx="1360.2" cy="582.8" r="3.3" fill="#f8b23e" stroke="#9a7a4a" stroke-width="1"/>
<circle cx="1378.7" cy="676.7" r="3.3" fill="#e0420a" stroke="#8a3a22" stroke-width="1"/>
<text x="1341.7" y="699.0" text-anchor="middle" font-family="Liberation Sans" font-size="12" fill="#111" letter-spacing="-0.6">29</text>
<text x="1360.2" y="573.8" text-anchor="middle" font-family="Liberation Sans" font-size="12" fill="#111" letter-spacing="-0.6">73</text>
<text x="1378.7" y="667.7" text-anchor="middle" font-family="Liberation Sans" font-size="12" fill="#111" letter-spacing="-0.6">40</text>
<circle cx="1412.5" cy="779.1" r="3.3" fill="#4189ea" stroke="#2f5f9f" stroke-width="1"/>
<circle cx="1431.0" cy="787.7" r="3.3" fill="#f8b23e" stroke="#9a7a4a" stroke-width="1"/>
<circle cx="1449.5" cy="790.5" r="3.3" fill="#e0420a" stroke="#8a3a22" stroke-width="1"/>
<text x="1412.5" y="770.1" text-anchor="middle" font-family="Liberation Sans" font-size="12" fill="#111" letter-spacing="-0.6">4</text>
<text x="1431.0" y="778.7" text-anchor="middle" font-family="Liberation Sans" font-size="12" fill="#111" letter-spacing="-0.6">1</text>
<text x="1449.5" y="781.5" text-anchor="middle" font-family="Liberation Sans" font-size="12" fill="#111" letter-spacing="-0.6">0</text>
<circle cx="1483.4" cy="685.2" r="3.3" fill="#4189ea" stroke="#2f5f9f" stroke-width="1"/>
<circle cx="1501.9" cy="494.6" r="3.3" fill="#f8b23e" stroke="#9a7a4a" stroke-width="1"/>
<circle cx="1520.4" cy="617.0" r="3.3" fill="#e0420a" stroke="#8a3a22" stroke-width="1"/>
<text x="1483.4" y="676.2" text-anchor="middle" font-family="Liberation Sans" font-size="12" fill="#111" letter-spacing="-0.6">37</text>
<text x="1501.9" y="485.6" text-anchor="middle" font-family="Liberation Sans" font-size="12" fill="#111" letter-spacing="-0.6">104</text>
<text x="1520.4" y="608.0" text-anchor="middle" font-family="Liberation Sans" font-size="12" fill="#111" letter-spacing="-0.6">61</text>
<circle cx="1554.2" cy="656.8" r="3.3" fill="#4189ea" stroke="#2f5f9f" stroke-width="1"/>
<circle cx="1572.7" cy="469.0" r="3.3" fill="#f8b23e" stroke="#9a7a4a" stroke-width="1"/>
<circle cx="1591.2" cy="642.6" r="3.3" fill="#e0420a" stroke="#8a3a22" stroke-width="1"/>
<text x="1554.2" y="670.8" text-anchor="middle" font-family="Liberation Sans" font-size="12" fill="#111" letter-spacing="-0.6">47</text>
<text x="1572.7" y="460.0" text-anchor="middle" font-family="Liberation Sans" font-size="12" fill="#111" letter-spacing="-0.6">113</text>
<text x="1591.2" y="633.6" text-anchor="middle" font-family="Liberation Sans" font-size="12" fill="#111" letter-spacing="-0.6">52</text>
<circle cx="509.3" cy="223.0" r="10" fill="#a9c40a"/><circle cx="506.3" cy="220.4" r="1.30" fill="#fff"/><circle cx="512.3" cy="220.4" r="1.30" fill="#fff"/><path d="M504.3 225.5 Q509.3 229.5 514.3 225.5" stroke="#fff" stroke-width="1.70" fill="none"/>
<circle cx="580.1" cy="223.0" r="10" fill="#f0b800"/><circle cx="577.1" cy="220.4" r="1.30" fill="#fff"/><circle cx="583.1" cy="220.4" r="1.30" fill="#fff"/><rect x="575.9" y="225.5" width="8.4" height="1.50" fill="#fff"/>
<circle cx="651.0" cy="223.0" r="10" fill="#f0b800"/><circle cx="648.0" cy="220.4" r="1.30" fill="#fff"/><circle cx="654.0" cy="220.4" r="1.30" fill="#fff"/><rect x="646.8" y="225.5" width="8.4" height="1.50" fill="#fff"/>
<circle cx="721.8" cy="223.0" r="10" fill="#f0b800"/><circle cx="718.8" cy="220.4" r="1.30" fill="#fff"/><circle cx="724.8" cy="220.4" r="1.30" fill="#fff"/><rect x="717.6" y="225.5" width="8.4" height="1.50" fill="#fff"/>
<circle cx="792.6" cy="223.0" r="10" fill="#f0b800"/><circle cx="789.6" cy="220.4" r="1.30" fill="#fff"/><circle cx="795.6" cy="220.4" r="1.30" fill="#fff"/><rect x="788.4" y="225.5" width="8.4" height="1.50" fill="#fff"/>
<circle cx="863.4" cy="223.0" r="10" fill="#f0b800"/><circle cx="860.4" cy="220.4" r="1.30" fill="#fff"/><circle cx="866.4" cy="220.4" r="1.30" fill="#fff"/><rect x="859.2" y="225.5" width="8.4" height="1.50" fill="#fff"/>
<rect x="932.8" y="221.0" width="5" height="5" fill="#1a5a8a"/>
<circle cx="1005.1" cy="223.0" r="10" fill="#a9c40a"/><circle cx="1002.1" cy="220.4" r="1.30" fill="#fff"/><circle cx="1008.1" cy="220.4" r="1.30" fill="#fff"/><path d="M1000.1 225.5 Q1005.1 229.5 1010.1 225.5" stroke="#fff" stroke-width="1.70" fill="none"/>
<circle cx="1075.9" cy="223.0" r="10" fill="#f0b800"/><circle cx="1072.9" cy="220.4" r="1.30" fill="#fff"/><circle cx="1078.9" cy="220.4" r="1.30" fill="#fff"/><rect x="1071.7" y="225.5" width="8.4" height="1.50" fill="#fff"/>
<circle cx="1146.7" cy="223.0" r="10" fill="#f0b800"/><circle cx="1143.7" cy="220.4" r="1.30" fill="#fff"/><circle cx="1149.7" cy="220.4" r="1.30" fill="#fff"/><rect x="1142.5" y="225.5" width="8.4" height="1.50" fill="#fff"/>
<circle cx="1217.6" cy="223.0" r="10" fill="#f0b800"/><circle cx="1214.6" cy="220.4" r="1.30" fill="#fff"/><circle cx="1220.6" cy="220.4" r="1.30" fill="#fff"/><rect x="1213.4" y="225.5" width="8.4" height="1.50" fill="#fff"/>
<circle cx="1288.4" cy="223.0" r="10" fill="#a9c40a"/><circle cx="1285.4" cy="220.4" r="1.30" fill="#fff"/><circle cx="1291.4" cy="220.4" r="1.30" fill="#fff"/><path d="M1283.4 225.5 Q1288.4 229.5 1293.4 225.5" stroke="#fff" stroke-width="1.70" fill="none"/>
<circle cx="1359.2" cy="223.0" r="10" fill="#f0b800"/><circle cx="1356.2" cy="220.4" r="1.30" fill="#fff"/><circle cx="1362.2" cy="220.4" r="1.30" fill="#fff"/><rect x="1355.0" y="225.5" width="8.4" height="1.50" fill="#fff"/>
<circle cx="1430.0" cy="223.0" r="10" fill="#a9c40a"/><circle cx="1427.0" cy="220.4" r="1.30" fill="#fff"/><circle cx="1433.0" cy="220.4" r="1.30" fill="#fff"/><path d="M1425.0 225.5 Q1430.0 229.5 1435.0 225.5" stroke="#fff" stroke-width="1.70" fill="none"/>
<circle cx="1500.9" cy="223.0" r="10" fill="#f0b800"/><circle cx="1497.9" cy="220.4" r="1.30" fill="#fff"/><circle cx="1503.9" cy="220.4" r="1.30" fill="#fff"/><rect x="1496.7" y="225.5" width="8.4" height="1.50" fill="#fff"/>
<circle cx="1571.7" cy="223.0" r="10" fill="#f0b800"/><circle cx="1568.7" cy="220.4" r="1.30" fill="#fff"/><circle cx="1574.7" cy="220.4" r="1.30" fill="#fff"/><rect x="1567.5" y="225.5" width="8.4" height="1.50" fill="#fff"/>
<text transform="translate(514.8,807.0) rotate(-45)" text-anchor="end" font-family="Liberation Sans" font-size="12" fill="#000" stroke="#000" stroke-width="0.2" letter-spacing="-0.2" xml:space="preserve">Mon 02.05.2016,  week 18</text>
<text transform="translate(585.6,807.0) rotate(-45)" text-anchor="end" font-family="Liberation Sans" font-size="12" fill="#000" stroke="#000" stroke-width="0.2" letter-spacing="-0.2" xml:space="preserve">Tue 03.05.2016,  week 18</text>
<text transform="translate(656.5,807.0) rotate(-45)" text-anchor="end" font-family="Liberation Sans" font-size="12" fill="#000" stroke="#000" stroke-width="0.2" letter-spacing="-0.2" xml:space="preserve">Wed 04.05.2016,  week 18</text>
<text transform="translate(727.3,807.0) rotate(-45)" text-anchor="end" font-family="Liberation Sans" font-size="12" fill="#000" stroke="#000" stroke-width="0.2" letter-spacing="-0.2" xml:space="preserve">Thu 05.05.2016,  week 18</text>
<text transform="translate(798.1,807.0) rotate(-45)" text-anchor="end" font-family="Liberation Sans" font-size="12" fill="#000" stroke="#000" stroke-width="0.2" letter-spacing="-0.2" xml:space="preserve">Fri 06.05.2016,  week 18</text>
<text transform="translate(868.9,807.0) rotate(-45)" text-anchor="end" font-family="Liberation Sans" font-size="12" fill="#000" stroke="#000" stroke-width="0.2" letter-spacing="-0.2" xml:space="preserve">Sat 07.05.2016,  week 18</text>
<text transform="translate(939.8,807.0) rotate(-45)" text-anchor="end" font-family="Liberation Sans" font-size="12" fill="#000" stroke="#000" stroke-width="0.2" letter-spacing="-0.2" xml:space="preserve">Sun 08.05.2016,  week 18</text>
<text transform="translate(1010.6,807.0) rotate(-45)" text-anchor="end" font-family="Liberation Sans" font-size="12" fill="#000" stroke="#000" stroke-width="0.2" letter-spacing="-0.2" xml:space="preserve">Mon 09.05.2016,  week 19</text>
<text transform="translate(1081.4,807.0) rotate(-45)" text-anchor="end" font-family="Liberation Sans" font-size="12" fill="#000" stroke="#000" stroke-width="0.2" letter-spacing="-0.2" xml:space="preserve">Tue 10.05.2016,  week 19</text>
<text transform="translate(1152.2,807.0) rotate(-45)" text-anchor="end" font-family="Liberation Sans" font-size="12" fill="#000" stroke="#000" stroke-width="0.2" letter-spacing="-0.2" xml:space="preserve">Wed 11.05.2016,  week 19</text>
<text transform="translate(1223.1,807.0) rotate(-45)" text-anchor="end" font-family="Liberation Sans" font-size="12" fill="#000" stroke="#000" stroke-width="0.2" letter-spacing="-0.2" xml:space="preserve">Thu 12.05.2016,  week 19</text>
<text transform="translate(1293.9,807.0) rotate(-45)" text-anchor="end" font-family="Liberation Sans" font-size="12" fill="#000" stroke="#000" stroke-width="0.2" letter-spacing="-0.2" xml:space="preserve">Fri 13.05.2016,  week 19</text>
<text transform="translate(1364.7,807.0) rotate(-45)" text-anchor="end" font-family="Liberation Sans" font-size="12" fill="#000" stroke="#000" stroke-width="0.2" letter-spacing="-0.2" xml:space="preserve">Sat 14.05.2016,  week 19</text>
<text transform="translate(1435.5,807.0) rotate(-45)" text-anchor="end" font-family="Liberation Sans" font-size="12" fill="#000" stroke="#000" stroke-width="0.2" letter-spacing="-0.2" xml:space="preserve">Sun 15.05.2016,  week 19</text>
<text transform="translate(1506.4,807.0) rotate(-45)" text-anchor="end" font-family="Liberation Sans" font-size="12" fill="#000" stroke="#000" stroke-width="0.2" letter-spacing="-0.2" xml:space="preserve">Mon 16.05.2016,  week 20</text>
<text transform="translate(1577.2,807.0) rotate(-45)" text-anchor="end" font-family="Liberation Sans" font-size="12" fill="#000" stroke="#000" stroke-width="0.2" letter-spacing="-0.2" xml:space="preserve">Tue 17.05.2016,  week 20</text>
<rect x="1701" y="699.0" width="19" height="9" fill="#4189ea" stroke="#4a6487" stroke-width="1.5"/>
<text x="1725" y="708.0" font-family="Liberation Sans" font-size="11" fill="#111" stroke="#111" stroke-width="0.35" letter-spacing="0.2">WC 1st floor</text>
<rect x="1701" y="713.8" width="19" height="9" fill="#f8b23e" stroke="#4a6487" stroke-width="1.5"/>
<text x="1725" y="722.8" font-family="Liberation Sans" font-size="11" fill="#111" stroke="#111" stroke-width="0.35" letter-spacing="0.2">WC 2nd floor</text>
<rect x="1701" y="728.6" width="19" height="9" fill="#e0420a" stroke="#4a6487" stroke-width="1.5"/>
<text x="1725" y="737.6" font-family="Liberation Sans" font-size="11" fill="#111" stroke="#111" stroke-width="0.35" letter-spacing="0.2">Toilet room 1st floor</text>
<rect x="1708" y="762" width="4" height="4" fill="#1a5a8a"/>
<text x="1725" y="768" font-family="Liberation Sans" font-size="11" fill="#111" stroke="#111" stroke-width="0.35" letter-spacing="-0.4">NPS</text>
<circle cx="1710.0" cy="786.0" r="10" fill="#1aa550"/><circle cx="1707.0" cy="783.4" r="1.30" fill="#fff"/><circle cx="1713.0" cy="783.4" r="1.30" fill="#fff"/><path d="M1705.0 788.5 Q1710.0 792.5 1715.0 788.5" stroke="#fff" stroke-width="1.70" fill="none"/>
<text x="1782.5" y="791.0" text-anchor="middle" font-family="Liberation Sans" font-size="12" fill="#111" stroke="#111" stroke-width="0.3">60 ... 100</text>
<circle cx="1710.0" cy="816.1" r="10" fill="#a9c40a"/><circle cx="1707.0" cy="813.5" r="1.30" fill="#fff"/><circle cx="1713.0" cy="813.5" r="1.30" fill="#fff"/><path d="M1705.0 818.6 Q1710.0 822.6 1715.0 818.6" stroke="#fff" stroke-width="1.70" fill="none"/>
<text x="1782.5" y="821.1" text-anchor="middle" font-family="Liberation Sans" font-size="12" fill="#111" stroke="#111" stroke-width="0.3">20 ... 60</text>
<circle cx="1710.0" cy="846.2" r="10" fill="#f0b800"/><circle cx="1707.0" cy="843.6" r="1.30" fill="#fff"/><circle cx="1713.0" cy="843.6" r="1.30" fill="#fff"/><rect x="1705.8" y="848.7" width="8.4" height="1.50" fill="#fff"/>
<text x="1782.5" y="851.2" text-anchor="middle" font-family="Liberation Sans" font-size="12" fill="#111" stroke="#111" stroke-width="0.3">-20 ... 20</text>
<circle cx="1710.0" cy="876.3" r="10" fill="#f08a10"/><circle cx="1707.0" cy="873.7" r="1.30" fill="#fff"/><circle cx="1713.0" cy="873.7" r="1.30" fill="#fff"/><path d="M1705.5 881.3 Q1710.0 877.3 1714.5 881.3" stroke="#fff" stroke-width="1.70" fill="none"/>
<text x="1782.5" y="881.3" text-anchor="middle" font-family="Liberation Sans" font-size="12" fill="#111" stroke="#111" stroke-width="0.3">-60 ... -20</text>
<circle cx="1710.0" cy="906.4" r="10" fill="#e82020"/><circle cx="1707.0" cy="903.8" r="1.30" fill="#fff"/><circle cx="1713.0" cy="903.8" r="1.30" fill="#fff"/><path d="M1705.5 911.4 Q1710.0 907.4 1714.5 911.4" stroke="#fff" stroke-width="1.70" fill="none"/>
</svg>
</body></html>
